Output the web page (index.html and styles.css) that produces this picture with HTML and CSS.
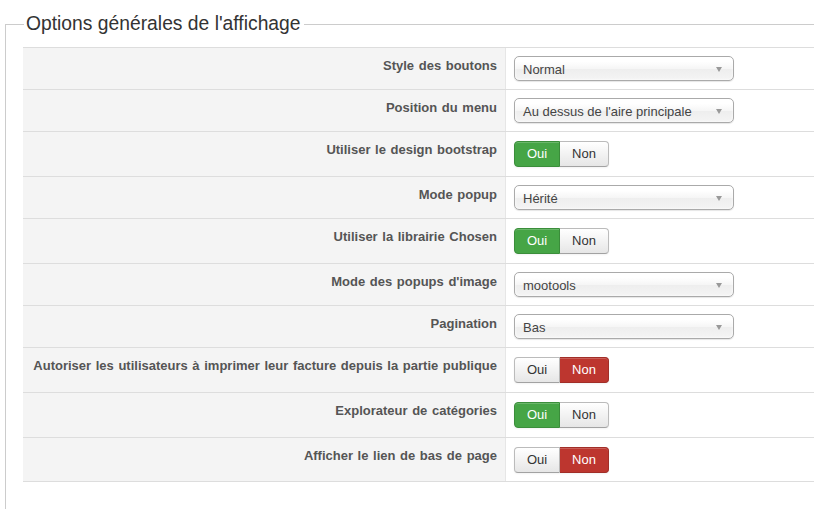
FILE: index.html
```html
<!DOCTYPE html>
<html lang="fr">
<head>
<meta charset="utf-8">
<title>Options</title>
<link rel="stylesheet" href="styles.css">
</head>
<body>
<fieldset class="panel">
  <legend class="panel-title">Options générales de l'affichage</legend>
  <div class="options">
    <div class="row">
      <div class="label">Style des boutons</div>
      <div class="value"><div class="select">Normal<span class="arrow"></span></div></div>
    </div>
    <div class="row">
      <div class="label">Position du menu</div>
      <div class="value"><div class="select">Au dessus de l'aire principale<span class="arrow"></span></div></div>
    </div>
    <div class="row row-toggle">
      <div class="label">Utiliser le design bootstrap</div>
      <div class="value"><div class="toggle"><span class="btn btn-yes on-green">Oui</span><span class="btn btn-no">Non</span></div></div>
    </div>
    <div class="row">
      <div class="label">Mode popup</div>
      <div class="value"><div class="select">Hérité<span class="arrow"></span></div></div>
    </div>
    <div class="row row-toggle">
      <div class="label">Utiliser la librairie Chosen</div>
      <div class="value"><div class="toggle"><span class="btn btn-yes on-green">Oui</span><span class="btn btn-no">Non</span></div></div>
    </div>
    <div class="row">
      <div class="label">Mode des popups d'image</div>
      <div class="value"><div class="select">mootools<span class="arrow"></span></div></div>
    </div>
    <div class="row">
      <div class="label">Pagination</div>
      <div class="value"><div class="select">Bas<span class="arrow"></span></div></div>
    </div>
    <div class="row row-toggle">
      <div class="label">Autoriser les utilisateurs à imprimer leur facture depuis la partie publique</div>
      <div class="value"><div class="toggle"><span class="btn btn-yes">Oui</span><span class="btn btn-no on-red">Non</span></div></div>
    </div>
    <div class="row row-toggle">
      <div class="label">Explorateur de catégories</div>
      <div class="value"><div class="toggle"><span class="btn btn-yes on-green">Oui</span><span class="btn btn-no">Non</span></div></div>
    </div>
    <div class="row row-toggle row-last">
      <div class="label">Afficher le lien de bas de page</div>
      <div class="value"><div class="toggle"><span class="btn btn-yes">Oui</span><span class="btn btn-no on-red">Non</span></div></div>
    </div>
  </div>
</fieldset>
</body>
</html>
```
FILE: styles.css
```css
html, body {
  margin: 0;
  padding: 0;
  background: #fff;
  overflow: hidden;
}
body {
  width: 814px;
  height: 509px;
  font-family: "Liberation Sans", Arial, sans-serif;
  font-size: 13px;
  color: #333;
}
.panel {
  margin: 12px 0 0 5px;
  padding: 0 0 40px 17px;
  width: 860px;
  border: 1px solid #ccc;
  border-right: none;
  border-bottom: none;
  min-height: 520px;
  box-sizing: border-box;
}
.panel-title {
  padding: 0 3px 0 2px;
  margin-left: 1px;
  font-size: 19.3px;
  line-height: 24px;
  color: #333;
  font-weight: normal;
}
.options {
  margin-top: 11px;
  border-bottom: 1px solid #ddd;
}
.row {
  display: grid;
  grid-template-columns: 483px 1fr;
  border-top: 1px solid #ddd;
  height: 41px;
}
.row-toggle {
  height: 44px;
}
.row-last {
  height: 43px;
}
.label {
  background: #f4f4f4;
  border-right: 1px solid #e6e6e6;
  text-align: right;
  padding: 9px 8px 0 8px;
  font-weight: bold;
  font-size: 13px;
  line-height: 18px;
  color: #555;
  white-space: nowrap;
  word-spacing: 1px;
}
.value {
  padding: 8px 0 0 8px;
}
.row-toggle .value {
  padding-top: 9px;
}
.select {
  position: relative;
  box-sizing: border-box;
  width: 220px;
  height: 25px;
  border: 1px solid #aaa;
  border-radius: 5px;
  background: linear-gradient(#fff 20%, #f6f6f6 50%, #eee 52%, #f4f4f4 100%);
  box-shadow: inset 0 0 3px #fff, 0 1px 1px rgba(0,0,0,0.1);
  padding: 1px 0 0 8px;
  line-height: 23px;
  color: #444;
  font-size: 13px;
}
.arrow {
  position: absolute;
  right: 11px;
  top: 10px;
  width: 0;
  height: 0;
  border-left: 3.5px solid transparent;
  border-right: 3.5px solid transparent;
  border-top: 5px solid #999;
}
.toggle {
  display: flex;
  height: 26px;
}
.btn {
  box-sizing: border-box;
  height: 26px;
  line-height: 24px;
  text-align: center;
  font-size: 13px;
  color: #333;
  border: 1px solid #bbb;
  border-bottom-color: #a2a2a2;
  background: linear-gradient(#fff, #e6e6e6);
  box-shadow: inset 0 1px 0 rgba(255,255,255,0.2), 0 1px 2px rgba(0,0,0,0.05);
}
.btn-yes {
  width: 46px;
  border-radius: 4px 0 0 4px;
}
.btn-no {
  width: 49px;
  border-left: none;
  border-radius: 0 4px 4px 0;
}
.on-green {
  background: #46a546;
  border-color: #3b8e3b;
  color: #fff;
}
.on-red {
  background: #bd362f;
  border-color: #a12e28;
  color: #fff;
}
```
